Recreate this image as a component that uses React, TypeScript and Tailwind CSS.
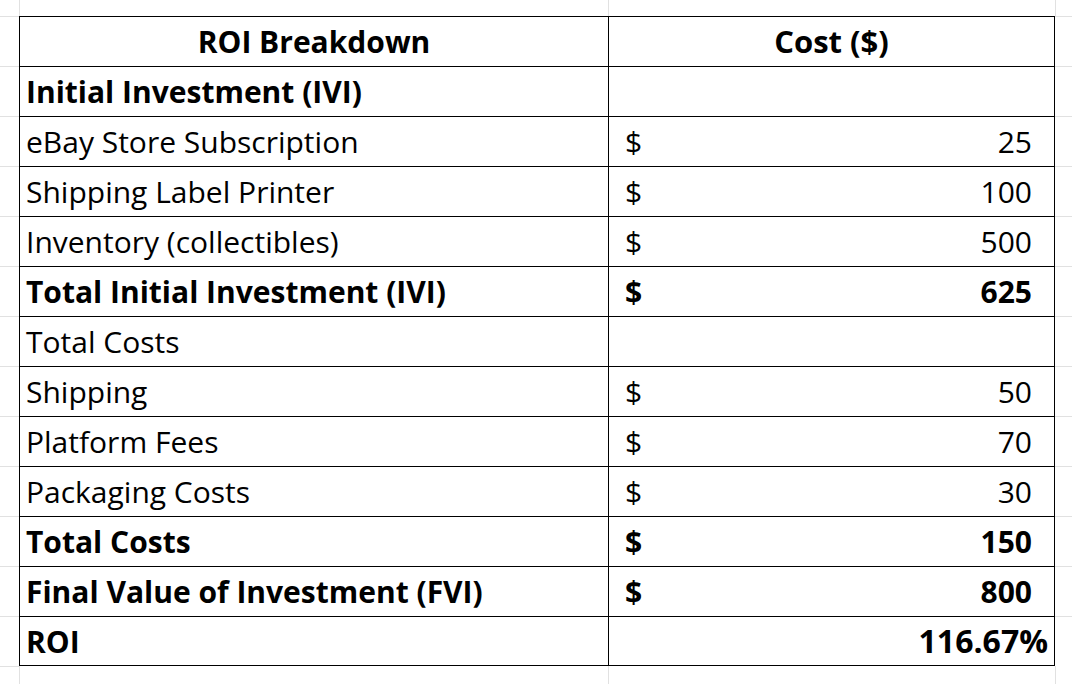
const rows: { label: string; amount?: string; bold?: boolean; pct?: string }[] = [
  { label: 'Initial Investment (IVI)', bold: true },
  { label: 'eBay Store Subscription', amount: '25' },
  { label: 'Shipping Label Printer', amount: '100' },
  { label: 'Inventory (collectibles)', amount: '500' },
  { label: 'Total Initial Investment (IVI)', amount: '625', bold: true },
  { label: 'Total Costs' },
  { label: 'Shipping', amount: '50' },
  { label: 'Platform Fees', amount: '70' },
  { label: 'Packaging Costs', amount: '30' },
  { label: 'Total Costs', amount: '150', bold: true },
  { label: 'Final Value of Investment (FVI)', amount: '800', bold: true },
  { label: 'ROI', pct: '116.67%', bold: true },
];

export default function App() {
  const last = rows.length - 1;
  return (
    <div
      className="h-[684px] w-[1072px] overflow-hidden bg-white text-black"
      style={{ fontFamily: '"Open Sans", "Noto Sans", sans-serif' }}
    >
      <div className="grid grid-cols-[19px_589px_447px_17px] grid-rows-[16px_repeat(13,50px)_18px]">
        {/* top margin row */}
        <div />
        <div className="border-l border-[#e1e1e1]" />
        <div className="border-l border-[#e1e1e1]" />
        <div className="border-l border-[#e1e1e1]" />

        {/* header */}
        <div className="border-t border-[#e1e1e1]" />
        <div className="flex items-center justify-center border-l border-t border-black text-[30px] font-bold">
          ROI Breakdown
        </div>
        <div className="flex items-center justify-center border-l border-r border-t border-black text-[31px] font-bold">
          Cost ($)
        </div>
        <div className="border-t border-[#e1e1e1]" />

        {rows.map((r, i) => {
          const bottom = i === last ? 'border-b' : '';
          const weight = r.bold ? 'font-bold' : 'font-normal';
          return [
            <div key={`m${i}`} className="border-t border-[#e1e1e1]" />,
            <div
              key={`l${i}`}
              className={`flex items-center border-l border-t border-black pl-[6px] text-[30px] ${bottom} ${weight}`}
            >
              {r.label}
            </div>,
            <div
              key={`v${i}`}
              className={`flex items-center justify-between border-l border-r border-t border-black text-[30px] ${bottom} ${weight} ${r.pct ? 'pr-[6px] text-[32px]' : 'pl-[16px] pr-[22px]'}`}
            >
              {r.amount ? (
                <>
                  <span>$</span>
                  <span>{r.amount}</span>
                </>
              ) : r.pct ? (
                <>
                  <span />
                  <span>{r.pct}</span>
                </>
              ) : null}
            </div>,
            <div key={`r${i}`} className="border-t border-[#e1e1e1]" />,
          ];
        })}

        {/* bottom margin row */}
        <div className="border-t border-[#e1e1e1]" />
        <div className="border-l border-[#e1e1e1]" />
        <div className="border-l border-[#e1e1e1]" />
        <div className="border-l border-[#e1e1e1]" />
      </div>
    </div>
  );
}
